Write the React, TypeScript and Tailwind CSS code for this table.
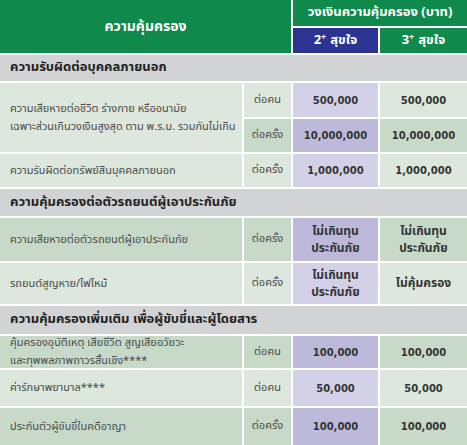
import React from "react";

const THAI = "font-['Noto_Sans_Thai','Noto_Sans',sans-serif]";
const NUM = "font-['DejaVu_Sans','Noto_Sans_Thai',sans-serif]";

const G = "bg-[#0f8a4c]";
const B = "bg-[#2c3491]";
const S = "bg-[#d2d3d4]";
const LG = "bg-[#dde7dd]";
const DG = "bg-[#c7dac9]";
const LP = "bg-[#d3d1e8]";
const DP = "bg-[#bcb9db]";

function Section({ children }: { children: React.ReactNode }) {
  return (
    <div className={`col-span-4 ${S} ${THAI} flex items-center pl-[10px] text-[13px] font-bold text-[#222]`}>
      {children}
    </div>
  );
}

function Label({ bg, children, rowSpan }: { bg: string; children: React.ReactNode; rowSpan?: boolean }) {
  return (
    <div
      className={`${bg} ${THAI} ${rowSpan ? "row-span-2" : ""} flex items-center whitespace-nowrap pl-[10px] text-[11px] leading-[18px] text-[#4a4a4a]`}
    >
      <div>{children}</div>
    </div>
  );
}

function Unit({ bg, children }: { bg: string; children: React.ReactNode }) {
  return (
    <div className={`${bg} ${THAI} flex items-center justify-center text-[11px] text-[#4a4a4a]`}>{children}</div>
  );
}

function Num({ bg, children }: { bg: string; children: React.ReactNode }) {
  return (
    <div className={`${bg} ${NUM} flex items-center justify-center text-[10px] font-bold text-[#333]`}>{children}</div>
  );
}

function TxtVal({ bg, children }: { bg: string; children: React.ReactNode }) {
  return (
    <div
      className={`${bg} ${THAI} flex items-center justify-center text-center text-[12px] font-bold leading-[17px] text-[#333]`}
    >
      <div>{children}</div>
    </div>
  );
}

export default function App() {
  return (
    <div className="h-[445px] w-[467px] overflow-hidden bg-white">
      <div className="grid grid-cols-[242px_47px_85px_87px] grid-rows-[26px_25px_26px_34px_33px_33px_27px_43px_41px_28px_32px_36px_37px] gap-[2px] bg-white">
        <div
          className={`col-span-2 row-span-2 ${G} ${THAI} flex items-center justify-center text-[14px] font-bold text-white`}
        >
          ความคุ้มครอง
        </div>
        <div className={`col-span-2 ${G} ${THAI} flex items-center justify-center text-[13px] font-bold text-white`}>
          วงเงินความคุ้มครอง (บาท)
        </div>
        <div className={`${B} ${THAI} flex items-center justify-center text-[13px] font-bold text-white`}>
          2<sup className="-top-[0.35em] mr-[4px] text-[9px]">+</sup>สุขใจ
        </div>
        <div className={`${G} ${THAI} flex items-center justify-center text-[13px] font-bold text-white`}>
          3<sup className="-top-[0.35em] mr-[4px] text-[9px]">+</sup>สุขใจ
        </div>

        <Section>ความรับผิดต่อบุคคลภายนอก</Section>

        <Label bg={LG} rowSpan>
          ความเสียหายต่อชีวิต ร่างกาย หรืออนามัย
          <br />
          เฉพาะส่วนเกินวงเงินสูงสุด ตาม พ.ร.บ. รวมกันไม่เกิน
        </Label>
        <Unit bg={LG}>ต่อคน</Unit>
        <Num bg={LP}>500,000</Num>
        <Num bg={LG}>500,000</Num>
        <Unit bg={DG}>ต่อครั้ง</Unit>
        <Num bg={DP}>10,000,000</Num>
        <Num bg={DG}>10,000,000</Num>

        <Label bg={LG}>ความรับผิดต่อทรัพย์สินบุคคลภายนอก</Label>
        <Unit bg={LG}>ต่อครั้ง</Unit>
        <Num bg={LP}>1,000,000</Num>
        <Num bg={LG}>1,000,000</Num>

        <Section>ความคุ้มครองต่อตัวรถยนต์ผู้เอาประกันภัย</Section>

        <Label bg={DG}>ความเสียหายต่อตัวรถยนต์ผู้เอาประกันภัย</Label>
        <Unit bg={DG}>ต่อครั้ง</Unit>
        <TxtVal bg={DP}>
          ไม่เกินทุน
          <br />
          ประกันภัย
        </TxtVal>
        <TxtVal bg={DG}>
          ไม่เกินทุน
          <br />
          ประกันภัย
        </TxtVal>

        <Label bg={LG}>รถยนต์สูญหาย/ไฟไหม้</Label>
        <Unit bg={LG}>ต่อครั้ง</Unit>
        <TxtVal bg={LP}>
          ไม่เกินทุน
          <br />
          ประกันภัย
        </TxtVal>
        <TxtVal bg={LG}>ไม่คุ้มครอง</TxtVal>

        <Section>ความคุ้มครองเพิ่มเติม เพื่อผู้ขับขี่และผู้โดยสาร</Section>

        <Label bg={DG}>
          คุ้มครองอุบัติเหตุ เสียชีวิต สูญเสียอวัยวะ
          <br />
          และทุพพลภาพถาวรสิ้นเชิง****
        </Label>
        <Unit bg={DG}>ต่อคน</Unit>
        <Num bg={DP}>100,000</Num>
        <Num bg={DG}>100,000</Num>

        <Label bg={LG}>ค่ารักษาพยาบาล****</Label>
        <Unit bg={LG}>ต่อคน</Unit>
        <Num bg={LP}>50,000</Num>
        <Num bg={LG}>50,000</Num>

        <Label bg={DG}>ประกันตัวผู้ขับขี่ในคดีอาญา</Label>
        <Unit bg={DG}>ต่อครั้ง</Unit>
        <Num bg={DP}>100,000</Num>
        <Num bg={DG}>100,000</Num>
      </div>
    </div>
  );
}
